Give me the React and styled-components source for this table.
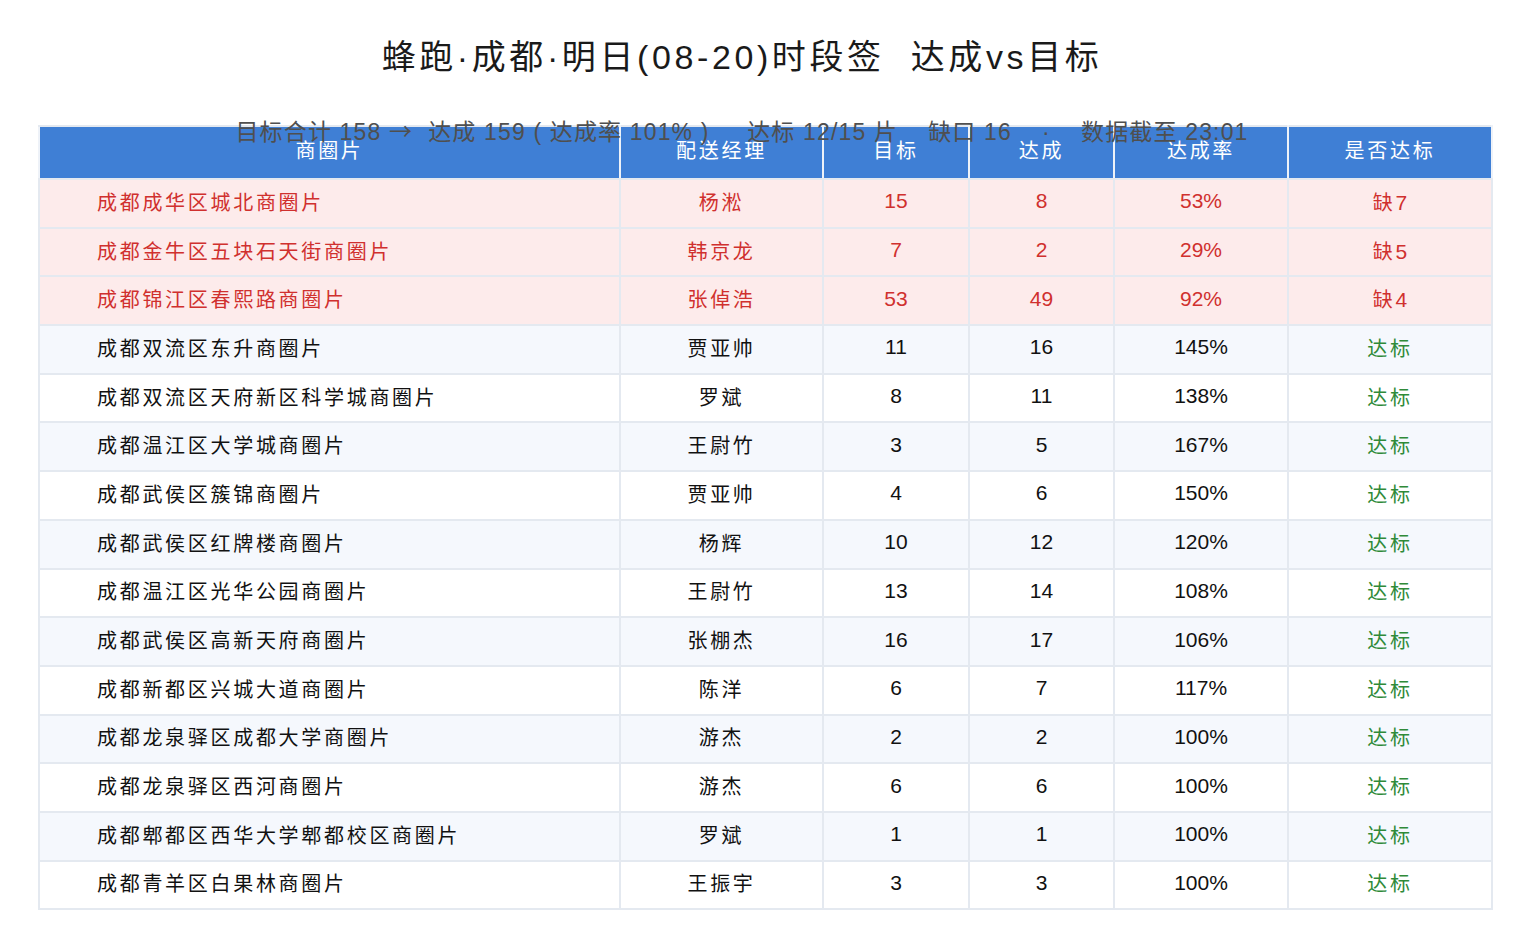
import React from "react";
import styled, { createGlobalStyle } from "styled-components";

const Global = createGlobalStyle`
  html, body { margin: 0; padding: 0; background: #ffffff; }
  body { font-family: "Liberation Sans", "Noto Sans CJK SC", sans-serif; }
`;

const Page = styled.div`
  width: 1528px;
  height: 947px;
  padding-top: 37px;
  box-sizing: border-box;
  overflow: hidden;
`;

const Heading = styled.div`
  width: 1484px;
  text-align: center;
`;

const Title = styled.h1`
  margin: 0;
  font-size: 34px;
  line-height: 40px;
  font-weight: 400;
  letter-spacing: 3.6px;
  color: #1a1a1a;
  white-space: pre;
`;

const Subtitle = styled.div`
  position: relative;
  z-index: 2;
  height: 26px;
  margin-top: 42px;
  margin-bottom: -20px;
  font-size: 23px;
  line-height: 26px;
  letter-spacing: 1.15px;
  color: #4f4f4f;
  white-space: pre;
`;

const Arrow = styled.span`
  font-family: "Noto Sans CJK SC", sans-serif;
  line-height: 1;
`;

const TableWrap = styled.div`
  padding-left: 38px;
`;

const Table = styled.table`
  width: 1453px;
  table-layout: fixed;
  border-collapse: collapse;
  font-size: 20px;
  letter-spacing: 2.7px;
`;

const HeadCell = styled.th`
  height: 53px;
  padding: 0 0 7px 0;
  background: #3f7fd5;
  color: #ffffff;
  font-weight: 400;
  text-align: center;
  border: 2px solid #e4e9f0;
  border-left-color: #eef2f8;
  border-right-color: #eef2f8;
  box-sizing: border-box;
`;

const Row = styled.tr`
  background: ${(p) => (p.$bad ? "#fdebeb" : p.$alt ? "#f5f8fd" : "#ffffff")};
  color: ${(p) => (p.$bad ? "#d0302e" : "#111111")};
`;

const Cell = styled.td`
  height: 48.7px;
  padding: 0 0 4px ${(p) => (p.$left ? "57px" : "0")};
  text-align: ${(p) => (p.$left ? "left" : "center")};
  font-size: ${(p) => (p.$num ? "21px" : "20px")};
  letter-spacing: ${(p) => (p.$num ? "0" : "2.7px")};
  border: 2px solid #e4e9f0;
  box-sizing: border-box;
  white-space: nowrap;
`;

const Status = styled.span`
  color: ${(p) => (p.$ok ? "#2f8a39" : "inherit")};
`;

const Digit = styled.span`
  font-size: 21px;
  letter-spacing: 0;
`;

const cols = [581, 203, 146, 145, 174, 204];

const data = [
  ["成都成华区城北商圈片", "杨淞", 15, 8],
  ["成都金牛区五块石天街商圈片", "韩京龙", 7, 2],
  ["成都锦江区春熙路商圈片", "张倬浩", 53, 49],
  ["成都双流区东升商圈片", "贾亚帅", 11, 16],
  ["成都双流区天府新区科学城商圈片", "罗斌", 8, 11],
  ["成都温江区大学城商圈片", "王尉竹", 3, 5],
  ["成都武侯区簇锦商圈片", "贾亚帅", 4, 6],
  ["成都武侯区红牌楼商圈片", "杨辉", 10, 12],
  ["成都温江区光华公园商圈片", "王尉竹", 13, 14],
  ["成都武侯区高新天府商圈片", "张棚杰", 16, 17],
  ["成都新都区兴城大道商圈片", "陈洋", 6, 7],
  ["成都龙泉驿区成都大学商圈片", "游杰", 2, 2],
  ["成都龙泉驿区西河商圈片", "游杰", 6, 6],
  ["成都郫都区西华大学郫都校区商圈片", "罗斌", 1, 1],
  ["成都青羊区白果林商圈片", "王振宇", 3, 3],
];

const headers = ["商圈片", "配送经理", "目标", "达成", "达成率", "是否达标"];

export default function App() {
  return (
    <Page>
      <Global />
      <Heading>
        <Title>{"蜂跑·成都·明日(08-20)时段签  达成vs目标"}</Title>
        <Subtitle>
          {"目标合计 158 "}
          <Arrow>→</Arrow>
          {"  达成 159 ( 达成率 101% )     达标 12/15 片    缺口 16    ·    数据截至 23:01"}
        </Subtitle>
      </Heading>
      <TableWrap>
        <Table>
          <colgroup>
            {cols.map((w, i) => (
              <col key={i} style={{ width: w }} />
            ))}
          </colgroup>
          <thead>
            <tr>
              {headers.map((h) => (
                <HeadCell key={h}>{h}</HeadCell>
              ))}
            </tr>
          </thead>
          <tbody>
            {data.map(([name, mgr, target, done], i) => {
              const bad = done < target;
              const rate = Math.round((done / target) * 100);
              return (
                <Row key={name} $bad={bad} $alt={i % 2 === 1}>
                  <Cell $left>{name}</Cell>
                  <Cell>{mgr}</Cell>
                  <Cell $num>{target}</Cell>
                  <Cell $num>{done}</Cell>
                  <Cell $num>{rate}%</Cell>
                  <Cell>
                    <Status $ok={!bad}>
                      {bad ? (
                        <>
                          缺<Digit>{target - done}</Digit>
                        </>
                      ) : (
                        "达标"
                      )}
                    </Status>
                  </Cell>
                </Row>
              );
            })}
          </tbody>
        </Table>
      </TableWrap>
    </Page>
  );
}
